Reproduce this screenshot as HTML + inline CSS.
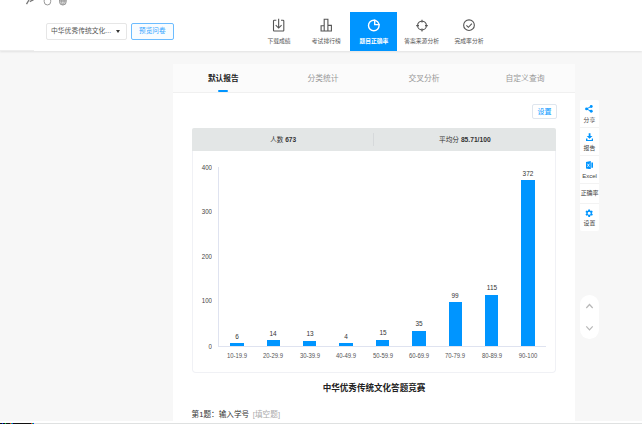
<!DOCTYPE html>
<html lang="zh-CN">
<head>
<meta charset="utf-8">
<title>题目正确率</title>
<style>
*{box-sizing:border-box;margin:0;padding:0}
html,body{width:642px;height:424px;overflow:hidden;background:#fff}
body{position:relative;font-family:"Liberation Sans","Noto Sans CJK SC",sans-serif;color:#333;-webkit-text-size-adjust:none}
.abs{position:absolute}
.t{position:absolute;white-space:nowrap;line-height:1}
.c{transform:translateX(-50%)}
#pagebg{left:0;top:50px;width:642px;height:370.6px;background:#f7f7f7}
#hdr{left:0;top:0;width:642px;height:50.6px;background:#fff;box-shadow:0 1px 2px rgba(0,0,0,.09)}
#sel{left:45.5px;top:23.3px;width:81px;height:16.3px;border:1px solid #e6e6e6;border-radius:2px;background:#fff}
#prev{left:130.5px;top:23.3px;width:43px;height:16.6px;border:1px solid #6cbcff;border-radius:2px;background:#f8fcff}
.nav{position:absolute;top:12px;width:47.8px;height:38.6px}
.nav.on{background:#0095ff}
.nav svg{position:absolute;left:17px;top:6px;width:14px;height:14px}
.nav span{position:absolute;left:0;width:48px;top:27.2px;text-align:center;font-size:5.8px;line-height:1;color:#555;white-space:nowrap}
.nav.on span{color:#fff;font-weight:bold}
#card{left:173px;top:64px;width:402.4px;height:358.6px;background:#fff}
#tabs{left:173px;top:64px;width:402.4px;height:29.3px;background:#fbfbfb;border-bottom:1px solid #f0f0f0}
.tab{position:absolute;top:75px;font-size:7.8px;line-height:1;color:#999;white-space:nowrap;transform:translateX(-50%)}
#setbtn{left:532.4px;top:103.6px;width:24.2px;height:15.9px;border:1px solid #dfe6ee;border-radius:2px;background:#fff}
#stat{left:191.5px;top:128.3px;width:364.1px;height:22.4px;background:#e3e6e6;border-radius:2px 2px 0 0}
#chart{left:191.6px;top:150.5px;width:364.4px;height:222.9px;background:#fff;border:1px solid #f0f1f5;border-top:none;border-radius:0 0 4px 4px}
.bar{position:absolute;background:#0095ff;width:13.4px}
.yl{position:absolute;font-size:7.6px;line-height:1;color:#444;width:20px;text-align:right;left:192.2px;transform:scaleX(.81);transform-origin:100% 50%}
.xl{position:absolute;font-size:7px;line-height:1;color:#555;top:351.5px;transform:translateX(-50%) scaleX(.85);white-space:nowrap}
.vl{position:absolute;font-size:7.6px;line-height:1;color:#333;transform:translateX(-50%) scaleX(.85);white-space:nowrap}
#side{left:580.2px;top:100px;width:18.6px;height:130.5px;background:#fff;border-radius:2px}
.sd{position:absolute;left:580.2px;width:18.6px;text-align:center;font-size:5.9px;line-height:1;color:#444;white-space:nowrap}
.sep{position:absolute;left:580.2px;width:18.6px;height:1px;background:#f3f3f3}
#pill{left:580px;top:295px;width:18.8px;height:44px;background:#fff;border-radius:9.4px}
</style>
</head>
<body>
<div class="abs" id="pagebg"></div>
<div class="abs" id="hdr"></div>
<div class="abs" style="left:0;top:49.700px;width:34px;height:1.500px;background:#eee"></div>

<!-- top cut icons -->
<svg class="abs" style="left:24px;top:0;width:50px;height:8px" viewBox="0 0 50 8" fill="none">
<path d="M2.500 4.200L5 0M5.800 1.600L7.200 0.800 9.500 0" stroke="#777" stroke-width="1.300"/>
<path d="M20.200 0V1.700A3.250 3.250 0 0 0 26.700 1.700V0" stroke="#999" stroke-width="1"/>
<path d="M35.500 0V1.700A3.350 3.350 0 0 0 42.200 1.700V0z" stroke="#999" stroke-width="1" fill="#ddd"/>
<path d="M35.500 1.200H42.200M37.600 0V2.500Q37.900 4.300 38.850 4.900Q39.800 4.300 40.100 2.500V0" stroke="#999" stroke-width=".8"/>
</svg>

<div class="abs" id="sel"></div>
<div class="t" style="left:51px;top:28px;font-size:6.8px;color:#555">中华优秀传统文化...</div>
<div class="abs" style="left:116.3px;top:30.2px;width:0;height:0;border-left:2px solid transparent;border-right:2px solid transparent;border-top:3px solid #333"></div>
<div class="abs" id="prev"></div>
<div class="t c" style="left:152.3px;top:28.2px;font-size:6.6px;color:#2ea3ff">预览问卷</div>

<div class="nav" style="left:255px">
<svg viewBox="0 0 14 14" fill="none" stroke="#555" stroke-width="1.1"><path d="M4.300 2.300H2.300a.8.8 0 0 0-.8.8v9.100a.8.8 0 0 0 .8.8h8.700a.8.8 0 0 0 .8-.8V3.100a.8.8 0 0 0-.8-.8H9"/><path d="M6.650 0.700V10M3.700 7.200l2.950 2.900 2.950-2.900"/></svg>
<span>下载成绩</span></div>
<div class="nav" style="left:302.300px">
<svg viewBox="0 0 14 14" fill="none" stroke="#555" stroke-width="1.1"><path d="M5.200 13V1.200h3.700V13M5.200 7.700H2.100V13h10.300V7.400H8.900"/></svg>
<span>考试排行榜</span></div>
<div class="nav on" style="left:349.900px;width:47.400px">
<svg viewBox="0 0 14 14" fill="none" stroke="#fff" stroke-width="1.4"><circle cx="6.800" cy="7.500" r="5.300"/><path d="M7.700 1.600V6.600h5"/></svg>
<span>题目正确率</span></div>
<div class="nav" style="left:397.600px">
<svg viewBox="0 0 14 14" fill="none" stroke="#555" stroke-width="1.1"><circle cx="7" cy="7.600" r="4.400"/><path d="M7 1.800v2.800M7 10.600v2.800M1.200 7.600h2.800M10 7.600h2.800"/></svg>
<span>答案来源分析</span></div>
<div class="nav" style="left:445px">
<svg viewBox="0 0 14 14" fill="none" stroke="#555" stroke-width="1.1"><circle cx="7" cy="7.200" r="5.350"/><path d="M4.400 7.300l2 2 3.500-3.700"/></svg>
<span>完成率分析</span></div>

<div class="abs" id="card"></div>
<div class="abs" id="tabs"></div>
<div class="tab" style="left:223.3px;color:#222;font-weight:bold;font-size:7.7px">默认报告</div>
<div class="tab" style="left:323px">分类统计</div>
<div class="tab" style="left:424px">交叉分析</div>
<div class="tab" style="left:525px">自定义查询</div>
<div class="abs" style="left:218.4px;top:90.4px;width:9.6px;height:2.1px;background:#0095ff;border-radius:1px"></div>

<div class="abs" id="setbtn"></div>
<div class="t c" style="left:544.6px;top:108px;font-size:7px;color:#0095ff">设置</div>

<div class="abs" id="stat"></div>
<div class="abs" style="left:373.1px;top:133px;width:1px;height:13.2px;background:#d6d9db"></div>
<div class="t c" style="left:283.2px;top:137.2px;font-size:6.6px;color:#333">人数 <b>673</b></div>
<div class="t c" style="left:464.8px;top:137.2px;font-size:6.7px;color:#333">平均分 <b>85.71/100</b></div>

<div class="abs" id="chart"></div>
<div class="abs" style="left:218.2px;top:166.8px;width:1px;height:180px;background:#dfe3f0"></div>
<div class="abs" style="left:218.2px;top:346px;width:327.6px;height:1px;background:#dfe3f0"></div>
<div class="yl" style="top:164.05px">400</div>
<div class="yl" style="top:208.05px">300</div>
<div class="yl" style="top:252.7px">200</div>
<div class="yl" style="top:297.2px">100</div>
<div class="yl" style="top:342.6px">0</div>

<div class="bar" style="left:230.2px;top:343.4px;height:2.9px"></div><div class="vl" style="left:236.9px;top:332.8px">6</div><div class="xl" style="left:236.9px">10-19.9</div>
<div class="bar" style="left:266.6px;top:340.1px;height:6.2px"></div><div class="vl" style="left:273.3px;top:329.5px">14</div><div class="xl" style="left:273.3px">20-29.9</div>
<div class="bar" style="left:303.0px;top:340.5px;height:5.8px"></div><div class="vl" style="left:309.7px;top:329.9px">13</div><div class="xl" style="left:309.7px">30-39.9</div>
<div class="bar" style="left:339.4px;top:343.4px;height:2.9px"></div><div class="vl" style="left:346.1px;top:332.8px">4</div><div class="xl" style="left:346.1px">40-49.9</div>
<div class="bar" style="left:375.8px;top:339.6px;height:6.7px"></div><div class="vl" style="left:382.5px;top:329.0px">15</div><div class="xl" style="left:382.5px">50-59.9</div>
<div class="bar" style="left:412.2px;top:330.7px;height:15.6px"></div><div class="vl" style="left:418.9px;top:320.1px">35</div><div class="xl" style="left:418.9px">60-69.9</div>
<div class="bar" style="left:448.6px;top:302.1px;height:44.2px"></div><div class="vl" style="left:455.3px;top:291.5px">99</div><div class="xl" style="left:455.3px">70-79.9</div>
<div class="bar" style="left:485.0px;top:295.0px;height:51.3px"></div><div class="vl" style="left:491.7px;top:284.4px">115</div><div class="xl" style="left:491.7px">80-89.9</div>
<div class="bar" style="left:521.4px;top:180.3px;height:166.0px"></div><div class="vl" style="left:528.1px;top:169.7px">372</div><div class="xl" style="left:528.1px">90-100</div>

<div class="t c" style="left:374px;top:384.1px;font-size:8.55px;font-weight:bold;color:#222">中华优秀传统文化答题竞赛</div>
<div class="t" style="left:191.5px;top:410.8px;font-size:7.65px;color:#333">第1题：输入学号 <span style="color:#aaa;margin-left:1.5px">[填空题]</span></div>

<!-- side toolbar -->
<div class="abs" id="side"></div>
<svg class="abs" style="left:585.300px;top:105.100px;width:7.800px;height:7.800px" viewBox="0 0 8 8" fill="#0095ff"><circle cx="6.400" cy="1.500" r="1.500"/><circle cx="1.600" cy="4" r="1.500"/><circle cx="6.400" cy="6.500" r="1.500"/><path d="M1.600 4L6.400 1.500M1.600 4L6.400 6.500" stroke="#0095ff" stroke-width="1" fill="none"/></svg>
<div class="sd" style="top:118.2px">分享</div>
<div class="sep" style="top:126.800px"></div>
<svg class="abs" style="left:586px;top:132.700px;width:7.200px;height:8.600px" viewBox="0 0 8 9" fill="#0095ff"><path d="M3 0h2v3h2.200L4 6.200 0.800 3H3zM0 5.800h1.600v1.700h4.800V5.800H8V9H0z"/></svg>
<div class="sd" style="top:146.3px">报告</div>
<div class="sep" style="top:154.900px"></div>
<svg class="abs" style="left:585.500px;top:160.500px;width:7.400px;height:8.400px" preserveAspectRatio="none" viewBox="0 0 8 8" fill="#0095ff"><path d="M0 0.900L5.200 0v8L0 7.100zM5.800 1.500H8v5H5.800z"/><path d="M1.500 2.600l2.200 2.900M3.700 2.600L1.500 5.500" stroke="#fff" stroke-width=".8" fill="none"/></svg>
<div class="sd" style="top:173px;font-size:6px">Excel</div>
<div class="sep" style="top:182.900px"></div>
<div class="sd" style="top:189.6px;font-size:6px;letter-spacing:-0.1px">正确率</div>
<div class="sep" style="top:202.700px"></div>
<svg class="abs" style="left:583.900px;top:207.950px;width:10.300px;height:10.300px" viewBox="0 0 24 24" fill="#0095ff"><path d="M19.400 13a7.500 7.500 0 0 0 0-2l2.100-1.600-2-3.500-2.500 1a7.500 7.500 0 0 0-1.700-1L15 3.300h-4l-.4 2.600a7.500 7.500 0 0 0-1.700 1l-2.500-1-2 3.500L6.600 11a7.500 7.500 0 0 0 0 2l-2.100 1.600 2 3.500 2.500-1a7.500 7.500 0 0 0 1.700 1l.4 2.600h4l.4-2.600a7.500 7.500 0 0 0 1.700-1l2.500 1 2-3.500zM13 15.500a3.500 3.500 0 1 1 0-7 3.500 3.500 0 0 1 0 7z" transform="translate(-1 0)"/></svg>
<div class="sd" style="top:221.2px">设置</div>

<div class="abs" id="pill"></div>
<svg class="abs" style="left:580px;top:295px;width:19px;height:44px" viewBox="0 0 19 44" fill="none" stroke="#b8b8b8" stroke-width="1.2"><path d="M6.300 13L9.500 9.500l3.200 3.500M6.300 31.300l3.200 3.500 3.200-3.500"/></svg>

<!-- bottom strip -->
<div class="abs" style="left:0;top:422.6px;width:642px;height:2px;background:#dfe1e1"></div>
<div class="abs" style="left:0;top:422.6px;width:34px;height:2px;background:#111"></div>
<div class="abs" style="left:1.5px;top:422.6px;width:1.2px;height:2px;background:#03f"></div>
<div class="abs" style="left:5px;top:422.6px;width:.8px;height:2px;background:#0c4"></div>
<div class="abs" style="left:10px;top:422.6px;width:1px;height:2px;background:#e22"></div>
<div class="abs" style="left:11px;top:422.6px;width:1px;height:2px;background:#0c4"></div>
<div class="abs" style="left:12px;top:422.6px;width:1px;height:2px;background:#03f"></div>
<div class="abs" style="left:31.200px;top:422.6px;width:1px;height:2px;background:#e22"></div>
<div class="abs" style="left:32.200px;top:422.6px;width:1px;height:2px;background:#0c4"></div>
<div class="abs" style="left:33.200px;top:422.6px;width:1px;height:2px;background:#03f"></div>
</body>
</html>
